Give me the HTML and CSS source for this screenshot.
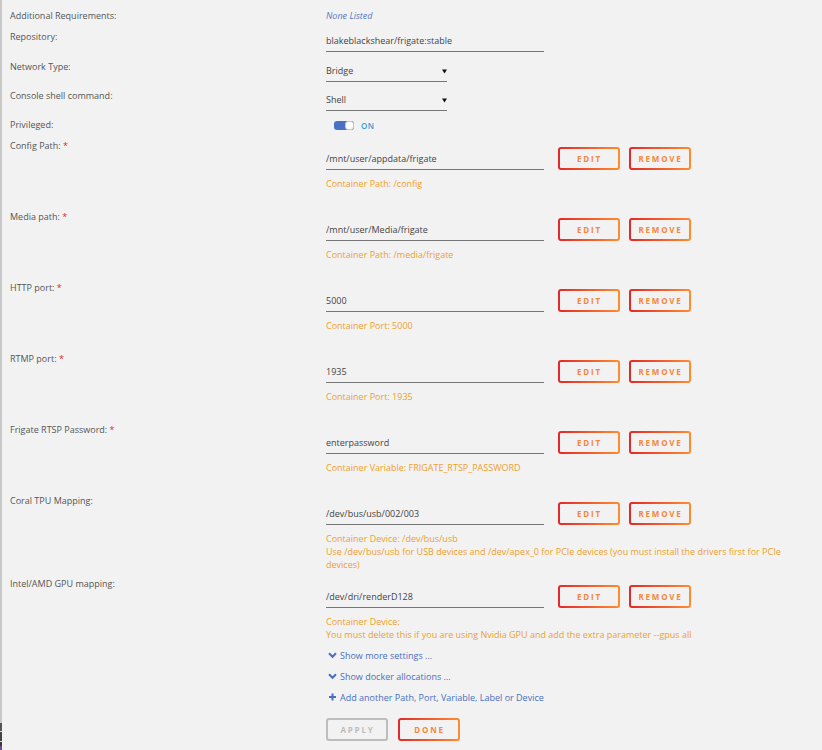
FILE: index.html
```html
<!DOCTYPE html>
<html lang="en">
<head>
<meta charset="utf-8">
<title>Update Container</title>
<link rel="stylesheet" href="styles.css">
</head>
<body>
<div class="page">
  <div class="edge"></div>
  <main class="form">
    <div class="row row-text">
      <div class="label">Additional Requirements:</div>
      <div class="value"><span class="none">None Listed</span></div>
    </div>
    <div class="row row-field row-repo">
      <div class="label">Repository:</div>
      <div class="value"><div class="field">blakeblackshear/frigate:stable</div></div>
    </div>
    <div class="row row-field">
      <div class="label">Network Type:</div>
      <div class="value"><div class="field select">Bridge<svg class="caret" width="5" height="5" viewBox="0 0 5 5"><path d="M0 0.5h5L2.5 4.5z" fill="#111"/></svg></div></div>
    </div>
    <div class="row row-field">
      <div class="label">Console shell command:</div>
      <div class="value"><div class="field select">Shell<svg class="caret" width="5" height="5" viewBox="0 0 5 5"><path d="M0 0.5h5L2.5 4.5z" fill="#111"/></svg></div></div>
    </div>
    <div class="row row-toggle">
      <div class="label">Privileged:</div>
      <div class="value toggle-wrap"><span class="switch"><span class="knob"></span></span><span class="on">ON</span></div>
    </div>

    <div class="row row-path">
      <div class="label">Config Path: <span class="req">*</span></div>
      <div class="value">
        <div class="pair"><div class="field">/mnt/user/appdata/frigate</div><button class="btn">EDIT</button><button class="btn">REMOVE</button></div>
        <div class="desc">Container Path: /config</div>
      </div>
    </div>
    <div class="row row-path">
      <div class="label">Media path: <span class="req">*</span></div>
      <div class="value">
        <div class="pair"><div class="field">/mnt/user/Media/frigate</div><button class="btn">EDIT</button><button class="btn">REMOVE</button></div>
        <div class="desc">Container Path: /media/frigate</div>
      </div>
    </div>
    <div class="row row-path">
      <div class="label">HTTP port: <span class="req">*</span></div>
      <div class="value">
        <div class="pair"><div class="field">5000</div><button class="btn">EDIT</button><button class="btn">REMOVE</button></div>
        <div class="desc">Container Port: 5000</div>
      </div>
    </div>
    <div class="row row-path">
      <div class="label">RTMP port: <span class="req">*</span></div>
      <div class="value">
        <div class="pair"><div class="field">1935</div><button class="btn">EDIT</button><button class="btn">REMOVE</button></div>
        <div class="desc">Container Port: 1935</div>
      </div>
    </div>
    <div class="row row-path">
      <div class="label">Frigate RTSP Password: <span class="req">*</span></div>
      <div class="value">
        <div class="pair"><div class="field">enterpassword</div><button class="btn">EDIT</button><button class="btn">REMOVE</button></div>
        <div class="desc">Container Variable: FRIGATE_RTSP_PASSWORD</div>
      </div>
    </div>
    <div class="row row-path row-long">
      <div class="label">Coral TPU Mapping:</div>
      <div class="value">
        <div class="pair"><div class="field">/dev/bus/usb/002/003</div><button class="btn">EDIT</button><button class="btn">REMOVE</button></div>
        <div class="desc">Container Device: /dev/bus/usb<br>Use /dev/bus/usb for USB devices and /dev/apex_0 for PCIe devices (you must install the drivers first for PCIe devices)</div>
      </div>
    </div>
    <div class="row row-path row-last">
      <div class="label">Intel/AMD GPU mapping:</div>
      <div class="value">
        <div class="pair"><div class="field">/dev/dri/renderD128</div><button class="btn">EDIT</button><button class="btn">REMOVE</button></div>
        <div class="desc">Container Device:<br>You must delete this if you are using Nvidia GPU and add the extra parameter --gpus all</div>
      </div>
    </div>

    <div class="row row-links">
      <div class="label"></div>
      <div class="value">
        <div class="link"><svg class="ico" width="9" height="7" viewBox="0 0 9 7"><path d="M1 1.2l3.5 3.6L8 1.2" fill="none" stroke="#4a6fbf" stroke-width="2"/></svg>Show more settings ...</div>
        <div class="link"><svg class="ico" width="9" height="7" viewBox="0 0 9 7"><path d="M1 1.2l3.5 3.6L8 1.2" fill="none" stroke="#4a6fbf" stroke-width="2"/></svg>Show docker allocations ...</div>
        <div class="link"><svg class="ico" width="9" height="8" viewBox="0 0 9 8"><path d="M4.5 0.5v7M1 4h7" fill="none" stroke="#4a6fbf" stroke-width="2"/></svg>Add another Path, Port, Variable, Label or Device</div>
        <div class="actions"><button class="btn btn-off">APPLY</button><button class="btn">DONE</button></div>
      </div>
    </div>
  </main>
</div>
</body>
</html>
```
FILE: styles.css
```css
html, body {
  margin: 0;
  height: 100%;
  background: #f2f2f2;
}

body {
  font-family: "Open Sans", "Noto Sans", sans-serif;
  font-size: 9px;
  color: #555;
}

.page {
  display: flex;
  min-height: 750px;
}

/* thin frame line on the left edge of the panel */
.edge {
  width: 2px;
  flex: none;
  background: linear-gradient(to bottom,
    #c8c8c8 0, #c8c8c8 723px,
    #555 723px, #555 731px,
    #ddd 731px, #ddd 732px,
    #444 732px, #444 741px,
    #ddd 741px, #ddd 742px,
    #3a3a3a 742px, #3a3a3a 746px,
    #6a4aa8 746px);
}

.form {
  flex: 1;
  padding: 9px 8px 0 8px;
}

.row {
  display: grid;
  grid-template-columns: 316px 1fr;
}

.label {
  line-height: 14px;
  color: #555;
  white-space: nowrap;
}

.req {
  color: #e22828;
}

.value {
  min-width: 0;
}

.none {
  font-style: italic;
  color: #5478c4;
  line-height: 14px;
}

.row-text { margin-bottom: 7px; }
.row-field { margin-bottom: 7px; }
.row-repo { margin-bottom: 8px; }
.row-toggle { margin-bottom: 7px; }

.field {
  width: 218px;
  box-sizing: border-box;
  padding: 4px 0 3px;
  line-height: 14px;
  color: #444;
  border-bottom: 1px solid #777;
}

.select {
  width: 121px;
  display: flex;
  align-items: center;
  justify-content: space-between;
  padding-right: 0;
}

.caret { display: block; }

.toggle-wrap {
  display: flex;
  align-items: center;
  gap: 7px;
  padding-left: 8px;
  height: 14px;
}

.switch {
  width: 20px;
  height: 9px;
  box-sizing: border-box;
  border-radius: 3px;
  background: #4a72c2;
  display: flex;
  justify-content: flex-end;
  overflow: hidden;
}

.knob {
  width: 9px;
  height: 9px;
  box-sizing: border-box;
  background: #fff;
  border: 1px solid #c8c8c8;
  border-radius: 3px;
}

.on {
  font-size: 8px;
  font-weight: 600;
  color: #3a98d6;
  letter-spacing: 0.5px;
}

/* path / port / variable entries */
.row-path { margin-bottom: 19px; }
.row-long { margin-bottom: 6px; }
.row-last { margin-bottom: 0; }

.pair {
  display: flex;
  align-items: flex-end;
  margin-top: 8px;
}

.pair .field { margin-right: 14px; }
.pair .btn + .btn { margin-left: 9px; }

.btn {
  width: 62px;
  height: 23px;
  box-sizing: border-box;
  padding: 0 0 0 1px;
  border: 2px solid transparent;
  border-radius: 3px;
  background:
    linear-gradient(#f2f2f2, #f2f2f2) padding-box,
    linear-gradient(90deg, #e22828, #ff8c2f) border-box;
  font-family: "Open Sans", "Noto Sans", sans-serif;
  font-size: 8px;
  font-weight: 700;
  letter-spacing: 1.8px;
  color: #f5863a;
  cursor: pointer;
}

.btn-off {
  background:
    linear-gradient(#f2f2f2, #f2f2f2) padding-box,
    linear-gradient(90deg, #bdbdbd, #bdbdbd) border-box;
  color: #bdbdbd;
}

.desc {
  margin-top: 7px;
  line-height: 14px;
  color: #f0a02a;
}

.row-long .desc,
.row-last .desc { line-height: 13px; }

.row-links .value { padding-top: 7px; }

.link {
  display: flex;
  align-items: center;
  gap: 3px;
  height: 14px;
  margin-bottom: 7px;
  padding-left: 2px;
  color: #4a6fbf;
}

.ico { display: block; flex: none; }

.actions {
  display: flex;
  gap: 10px;
  margin-top: 14px;
}
```
